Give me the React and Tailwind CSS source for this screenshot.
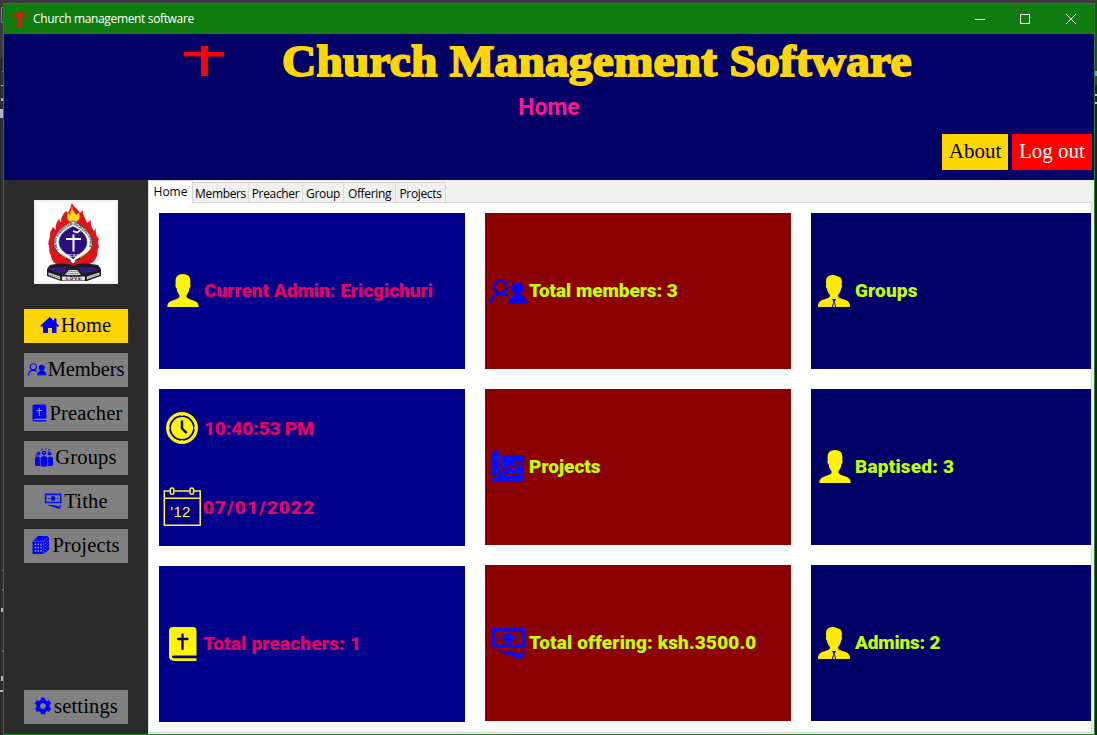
import React from 'react';

const PERSON =
  'M5.3 36C5.4 32 7.2 30.6 10.5 29.4C14.8 27.9 17.8 27.2 17.7 24.4C15.8 22 14.9 19.8 14.6 17.2C13.4 16.6 13.2 14 13.7 12.8C12.9 6.6 15 3 21 3C27 3 29.1 6.6 28.3 12.8C28.8 14 28.6 16.6 27.4 17.2C27.1 19.8 26.2 22 24.4 24.4C24.3 27.2 27.3 27.9 31.6 29.4C34.9 30.6 36.6 32 36.7 36Z';

function Svg({ small, children }) {
  return (
    <svg viewBox="0 0 40 40" className={small ? 'h-5 w-5 shrink-0' : 'h-10 w-10 shrink-0'} fill="none">
      {children}
    </svg>
  );
}

const PersonIcon = () => (
  <Svg><path d={PERSON} fill="#fff500" /></Svg>
);

const SuitIcon = () => (
  <Svg>
    <path fill="#ffeb00" d="M4 36C4 31.5 5.8 30 9.5 28.6C13.5 27.2 16.2 26.8 15.9 24.2C14.2 22 13.2 20 12.9 17.6C11.9 17 11.6 14.6 12.2 13.4C11.2 8 13.2 4 18.5 4C20.6 4 22 4.3 23 5.2C27.4 5.4 28.6 9 27.7 13.4C28.3 14.6 28 17 27 17.6C26.7 20 25.8 22 24.1 24.2C23.9 26.8 26.5 27.2 30.5 28.6C34.2 30 36 31.5 36 36Z" />
    <path fill="#000066" d="M17.800 28h4.400l-1.400 1.800V31l1.400 5H21l-1-5.500-1 5.500h-1.200l1.400-5v-1.200z" />
  </Svg>
);

const MembersIcon = ({ small }) => (
  <Svg small={small}>
    <circle cx="12.700" cy="15.700" r="6.200" stroke="#0000ff" strokeWidth="2.400" />
    <path d="M2.600 32.500C3.500 26 7 22.800 12.700 22.800C16 22.800 18 23.500 19.500 25" stroke="#0000ff" strokeWidth="2.400" />
    <circle cx="29.500" cy="17.300" r="6" fill="#0000ff" />
    <path d="M20.500 32.500C20.900 27 24 23 29.500 23S38.500 27 39 32.500Z" fill="#0000ff" />
  </Svg>
);

const BookIcon = ({ small, color, cut }) => (
  <Svg small={small}>
    <path fill={color} d="M11 3H31Q34.500 3 34.500 6.500V31.500H12Q10 31.500 10 32.800T12 34.200H34.500V37H12Q7 36.500 7 32V7Q7 3 11 3Z" />
    <path fill={cut} d="M10.500 32.300H34.500V34H11.500Q10.300 34 10.500 32.300Z" />
    <path stroke={cut} strokeWidth="2.300" strokeLinecap="round" d="M20.500 10.500V25M16 15H25.500" />
  </Svg>
);

const MoneyIcon = ({ small }) => (
  <Svg small={small}>
    <path stroke="#000fff" strokeWidth="3.200" d="M5.200 6.800H35.300V23H5.200Z" />
    <circle cx="20.200" cy="14.900" r="5" fill="#000fff" />
    <circle cx="11.700" cy="14.900" r="1.400" fill="#000fff" />
    <circle cx="28.800" cy="14.900" r="1.400" fill="#000fff" />
    <path fill="#000fff" d="M7.500 27.500L20 28.200L33 31L34 27.500H36.800L34.200 35Q33.500 36.400 31 35.500Z" />
  </Svg>
);

const ChartIcon = () => (
  <Svg>
    <path fill="#000fff" d="M4 8Q4 3.500 9 3Q11 3.300 11 6V23Q11 27.500 7.500 28.600H4Z" />
    <path fill="#000fff" d="M13 8.500H33Q35.700 8.500 35.700 11.500V31Q35.700 35 32.500 35H7Q4 35 4 32.500V30H7.500Q13 29 13 23Z" />
    <path stroke="#8b0000" strokeWidth="1.700" d="M16.500 24L22 18.300L26 21.500L31.500 16M26.500 15.800H31.800V21M16.500 27.700H31.500" />
  </Svg>
);

const ClockIcon = () => (
  <Svg>
    <circle cx="20" cy="20" r="14.400" stroke="#fff500" strokeWidth="3.200" />
    <circle cx="20" cy="20" r="11" fill="#fff500" />
    <path stroke="#fff500" strokeWidth="1.600" d="M20 6v2M20 32v2M6 20h2M32 20h2" />
    <path stroke="#00008b" strokeWidth="2.400" strokeLinecap="round" strokeLinejoin="round" d="M20 13.500V20.500L24 24.300" />
  </Svg>
);

const CalendarIcon = () => (
  <Svg>
    <path stroke="#fff533" strokeWidth="1.500" d="M8 4H2.300V38.200H38.200V4H32M12.500 4H27.500M2.300 11.300H38.200" />
    <rect x="8.300" y="1" width="3.600" height="6.300" rx="1.600" stroke="#fff533" strokeWidth="1.500" />
    <rect x="28" y="1" width="3.600" height="6.300" rx="1.600" stroke="#fff533" strokeWidth="1.500" />
    <text x="8.300" y="29.800" fill="#fff533" fontFamily="Liberation Sans" fontSize="15" fontWeight="400" textLength="20">'12</text>
  </Svg>
);

const HomeIcon = () => (
  <Svg small>
    <path fill="#0000ff" d="M19.500 4L28 11.500V7H33V16L38 21V23H33V36H24V26H16V36H6V23H1V21Z" />
  </Svg>
);

const GroupsIcon = () => (
  <Svg small>
    <g fill="#0000ff">
      <path d="M2 36V24Q2 19 7 19T13 22Q15 18 20 18T27 22Q28 19 33 19T38 24V36Q36 38 34 38H29L27 36L25 39H15L13 36L11 38H6Q2 38 2 36Z" />
      <circle cx="9" cy="13" r="4" />
      <circle cx="20" cy="12" r="4.500" />
      <circle cx="31" cy="13" r="4" />
      <path d="M13 7L17 2V6ZM21 5L24 1L25 4ZM27 8L30 3L32 6ZM3 16L7 17L4 20Z" />
    </g>
    <path stroke="#808080" strokeWidth="1.500" d="M12.500 23V36M27.500 23V36M7 11l4 3M18 11h4M29 14l4-3" />
  </Svg>
);

const BuildingIcon = () => (
  <Svg small>
    <path fill="#0000ff" d="M3 13L14 2H33L36 5V29L25 38H3Z" />
    <path stroke="#808080" strokeWidth="1.300" d="M4 12.500H25.500V38M25.500 12.500L35 4.500" />
    <path fill="#9090b8" d="M7.500 17h3v3.500h-3zM13 17h3v3.500h-3zM18.500 17h3v3.500h-3zM7.500 23.500h3V27h-3zM13 23.500h3V27h-3zM18.500 23.500h3V27h-3zM7.500 30h3v3.500h-3zM13 30h3v3.500h-3zM18.500 30h3v3.500h-3z" />
    <path stroke="#9090b8" strokeWidth="1.800" strokeDasharray="2.500 2" d="M28 18L35 11M28 24L35 17M28 30L35 23" />
  </Svg>
);

const GearIcon = () => (
  <Svg small>
    <circle cx="20" cy="20" r="9.500" stroke="#0000ff" strokeWidth="7.500" />
    <g stroke="#0000ff" strokeWidth="8.500">
      <path d="M20 3.500V9M20 31V36.500M5.700 11.700L10.500 14.500M29.500 25.500L34.300 28.300M5.700 28.300L10.500 25.500M29.500 14.500L34.300 11.700" />
    </g>
  </Svg>
);

const Crest = () => (
  <svg viewBox="0 0 84 84" className="mx-auto h-[84px] w-[84px]">
    <rect width="84" height="84" fill="#f0f0f0" />
    <rect x="2" y="2" width="80" height="80" fill="#fff" />
    <path fill="#e2121b" d="M38 2C38 6 44 9 46 13L49 10C48 15 52 19 53 23L57 20C56 25 58 28 60 31L62 28C61 34 63 37 65 39C63 42 65 45 65 47C62 50 65 53 62 58C59 64 54 65 50 65H28C20 65 17 60 17 55C14 52 16 49 15 46C13 42 16 39 16 36C15 32 18 30 19 27L22 30C21 25 23 22 25 19L27 23C27 17 29 14 32 11L34 13C36 9 37 7 38 2Z" />
    <path fill="#f7dc1c" stroke="#f08a1c" strokeWidth=".7" d="M38 7C38 11 41 12 42 15L45 13C47 18 44 22 39.500 22.500C34 22 32 18 34 13L36 15C36 11 38 10 38 7Z" />
    <path fill="#fff" stroke="#333" strokeWidth=".8" d="M39 21C44 23 58.500 31 58.500 43C58.500 53 47 56 39 64C31 56 19.500 53 19.500 43C19.500 31 34 23 39 21Z" />
    <path fill="#2d1080" stroke="#555" strokeWidth=".6" d="M39 26.500C45 29 53 34 53 42C53 51 45 53 39 59C33 53 25 51 25 42C25 34 33 29 39 26.500Z" />
    <path id="crest-arc" fill="none" d="M24.500 50C17 37 31 28.500 39 24.500C47 28.500 61 37 53.500 50" />
    <text fill="#222" fontFamily="Liberation Sans" fontSize="3.700" fontWeight="700">
      <textPath href="#crest-arc" textLength="64">PRESBYTERIAN CHURCH OF EAST AFRICA</textPath>
    </text>
    <path stroke="#fff" strokeWidth="2" d="M39.500 34.500V51.500M32 39H47" />
    <path stroke="#fff" strokeWidth="1.600" d="M39 31L43 32.500L46 30.500" fill="none" />
    <text x="33" y="56.500" fill="#eee" fontFamily="Liberation Sans" fontSize="4" fontWeight="700" textLength="12">P.C.E.A</text>
    <path stroke="#eda01c" strokeWidth="1.200" d="M27 54L33 58M51 54L45 58" />
    <path stroke="#222" strokeWidth="1.200" d="M32 58L37 61M46 58L41 61" />
    <path fill="#1b1b20" d="M16 65Q28 62 39 65Q50 62 64 65L67 69V76L53 81H27L13 76V69Z" />
    <path fill="#311a85" d="M16 68L34 66.500L30 74L15 70ZM62 68L44 66.500L48 74L65 70Z" />
    <path fill="#ddd" d="M35 70H43L47 75H31ZM28 76.500H51V80.500H28ZM14.500 72.500L26 76.500V79.500L14.500 75ZM65.500 72.500L53 76.500V79.500L65.500 75Z" />
    <path stroke="#444" strokeWidth=".7" strokeDasharray="1.500 .6" d="M16 74.500L25 77.700M54.500 77.700L64 74.500M35 71.500H43M34 73.500H45" />
    <text x="32" y="80.300" fill="#111" fontFamily="Liberation Sans" fontSize="4.500" fontWeight="700" textLength="15">LOVE</text>
  </svg>
);

function NavButton({ icon, label, active, track = 'tracking-[0.15px]' }) {
  return (
    <button className={`flex h-[34px] w-[104px] items-center justify-center gap-px pr-px pb-[2px] font-['Liberation_Serif',serif] text-[20.5px] leading-none text-black ${active ? 'bg-[#ffd700]' : 'bg-[#808080]'}`}>
      {icon}
      <span className={`whitespace-nowrap ${track}`}>{label}</span>
    </button>
  );
}

function Stat({ icon, label, color, gap, track = '', lift = 'pb-[2px]' }) {
  return (
    <div className={`flex items-center font-['Roboto',sans-serif] text-[19px] leading-none font-black ${color} ${gap}`}>
      {icon}
      <span className={`whitespace-nowrap ${lift} ${track}`}>{label}</span>
    </div>
  );
}

const PINK = 'text-[#e60060]';
const LIME = 'text-[#bfff00]';

function Card({ bg, size, children }) {
  return <div className={`flex shrink-0 flex-col justify-center pl-[3px] ${bg} ${size}`}>{children}</div>;
}

const TABS = [
  ['Members', 'w-[56px]'],
  ['Preacher', 'w-[54px]'],
  ['Group', 'w-[41px]'],
  ['Offering', 'w-[52px]'],
  ['Projects', 'w-[50px]'],
];

export default function App() {
  return (
    <div className="flex h-[735px] w-[1097px] overflow-hidden bg-[#2b2b2b]">
      <svg viewBox="0 0 3 735" className="h-[735px] w-[3px] shrink-0">
        <path fill="#3a3c3e" d="M0 0H3V58H0Z" />
        <path stroke="#3fa07f" fill="none" d="M3 7.500H1.500V22.500H3" />
        <path fill="#a9b7c6" d="M1 85h2v1H1zM1 98h2v3H1zM0 109h3v9H0zM1 608h2v4H1zM1 676h2v5H1zM0 690h3v2H0z" />
        <path fill="#4a88b0" d="M2 71h1v1H2zM2 570h1v1H2zM2 589h1v2H2zM2 650h1v2H2z" />
      </svg>
      <div className="flex h-[735px] w-[1092px] shrink-0 flex-col">
        <div className="h-[3px] shrink-0 bg-[#3a3a3c]" />
        <div className="flex h-[732px] flex-col border border-[#218321] bg-[#f0f0f0]">
          <div className="flex h-[30px] shrink-0 items-center bg-[#107c10] pl-2">
            <svg viewBox="0 0 16 16" className="h-4 w-4"><path fill="#dd1a0c" d="M6 0h4v3.500h6v2h-6V16H6V5.500H0v-2h6z" /></svg>
            <span className="ml-[5px] font-['Open_Sans',sans-serif] text-[12px] tracking-[-0.35px] text-white">Church management software</span>
            <svg viewBox="0 0 120 16" className="mr-[3px] ml-auto h-4 w-[120px]" fill="none" stroke="#fff">
              <path d="M4 8.500h10M49.500 3.500h9v9h-9zM95 3l10 10M105 3L95 13" />
            </svg>
          </div>

          <header className="flex h-[146px] shrink-0 flex-col bg-[#000066]">
            <div className="flex h-[56px] items-center pl-[180px]">
              <svg viewBox="0 0 40 30" className="mb-[3px] h-[30px] w-10"><path fill="#f00" d="M17 0h7v6h16v4.500H24V30h-7V10.500H0V6h17z" /></svg>
              <h1 className="ml-[58px] origin-left scale-x-[1.088] pb-px font-['Liberation_Serif',serif] text-[43.5px] leading-none font-bold tracking-[0.2px] whitespace-nowrap text-[#ffd700] [-webkit-text-stroke:1.8px_#ffd700]">Church Management Software</h1>
            </div>
            <h2 className="flex h-[34px] items-center justify-center pt-[3px] font-['Roboto',sans-serif] text-[23px] font-bold text-[#ff1493]">Home</h2>
            <div className="mt-[10px] flex justify-end gap-1 pr-[2px] font-['Liberation_Serif',serif] text-[21px] leading-none">
              <button className="h-9 w-[66px] bg-[#ffd700] pb-[2px] text-black">About</button>
              <button className="h-9 w-20 bg-[#ff0000] pb-[2px] text-white">Log out</button>
            </div>
          </header>

          <div className="flex h-[554px]">
            <aside className="flex w-36 shrink-0 flex-col bg-[#2b2b2b] pt-5 pb-[10px]">
              <Crest />
              <nav className="mt-[25px] flex flex-1 flex-col gap-[10px] pl-5">
                <NavButton active icon={<HomeIcon />} label="Home" />
                <NavButton icon={<MembersIcon small />} label="Members" track="tracking-[-0.1px]" />
                <NavButton icon={<BookIcon small color="#0000ff" cut="#9a9ac0" />} label="Preacher" />
                <NavButton icon={<GroupsIcon />} label="Groups" />
                <NavButton icon={<MoneyIcon small />} label="Tithe" />
                <NavButton icon={<BuildingIcon />} label="Projects" />
                <div className="mt-auto"><NavButton icon={<GearIcon />} label="settings" /></div>
              </nav>
            </aside>

            <main className="flex w-[944px] shrink-0 flex-col">
              <div className="flex h-[23px] shrink-0 font-['Open_Sans',sans-serif] text-[12px] leading-none text-black">
                <div className="flex w-11 items-center justify-center border-t border-l border-[#d9d9d9] bg-white">Home</div>
                <div className="flex flex-1 items-end border-b border-l border-[#d9d9d9] tracking-[-0.35px]">
                  {TABS.map(([t, w]) => (
                    <div key={t} className={`flex h-5 items-center justify-center border-t border-r border-[#d9d9d9] pt-[2px] ${w}`}>{t}</div>
                  ))}
                </div>
              </div>
              <div className="flex h-[530px] gap-5 overflow-hidden border-r border-b border-l border-[#d9d9d9] bg-white pt-[10px] pl-[10px]">
                <div className="flex flex-col gap-5">
                  <Card bg="bg-[#00008b]" size="h-[156px] w-[306px]">
                    <Stat icon={<PersonIcon />} label="Current Admin: Ericgichuri" color={PINK} gap="gap-[2px]" />
                  </Card>
                  <Card bg="bg-[#00008b]" size="h-[157px] w-[306px]">
                    <div className="flex flex-col gap-[39px]">
                      <Stat icon={<ClockIcon />} label="10:40:53 PM" color={PINK} gap="gap-[2px]" track="tracking-[-0.15px]" lift="" />
                      <Stat icon={<CalendarIcon />} label="07/01/2022" color={PINK} gap="gap-px" track="tracking-[1.05px]" lift="" />
                    </div>
                  </Card>
                  <Card bg="bg-[#00008b]" size="h-[156px] w-[306px]">
                    <Stat icon={<BookIcon color="#fff500" cut="#00008b" />} label="Total preachers: 1" color={PINK} gap="gap-px" track="tracking-[0.18px]" />
                  </Card>
                </div>
                <div className="flex flex-col gap-5">
                  <Card bg="bg-[#8b0000]" size="h-[156px] w-[306px]">
                    <Stat icon={<MembersIcon />} label="Total members: 3" color={LIME} gap="gap-px" track="tracking-[-0.07px]" />
                  </Card>
                  <Card bg="bg-[#8b0000]" size="h-[156px] w-[306px]">
                    <Stat icon={<ChartIcon />} label="Projects" color={LIME} gap="gap-px" />
                  </Card>
                  <Card bg="bg-[#8b0000]" size="h-[156px] w-[306px]">
                    <Stat icon={<MoneyIcon />} label="Total offering: ksh.3500.0" color={LIME} gap="gap-px" track="tracking-[0.14px]" />
                  </Card>
                </div>
                <div className="flex flex-col gap-5">
                  <Card bg="bg-[#000066]" size="h-[156px] w-[280px]">
                    <Stat icon={<SuitIcon />} label="Groups" color={LIME} gap="gap-px" track="tracking-[0.15px]" />
                  </Card>
                  <Card bg="bg-[#000066]" size="h-[156px] w-[280px]">
                    <Stat icon={<PersonIcon />} label="Baptised: 3" color={LIME} gap="gap-px" track="tracking-[0.2px]" />
                  </Card>
                  <Card bg="bg-[#000066]" size="h-[156px] w-[280px]">
                    <Stat icon={<SuitIcon />} label="Admins: 2" color={LIME} gap="gap-px" track="tracking-[-0.2px]" />
                  </Card>
                </div>
              </div>
            </main>
          </div>
        </div>
      </div>
      <svg viewBox="0 0 2 735" className="h-[735px] w-[2px] shrink-0">
        <path fill="#3a3a3c" d="M0 0H2V85H0Z" />
        <path fill="#1c1c1c" d="M0 85H2V735H0Z" />
        <path fill="#c9c98f" d="M0 94h2v2H0zM0 102h2v2H0z" />
        <path fill="#6fa5c9" d="M0 71h2v5H0z" />
      </svg>
    </div>
  );
}
